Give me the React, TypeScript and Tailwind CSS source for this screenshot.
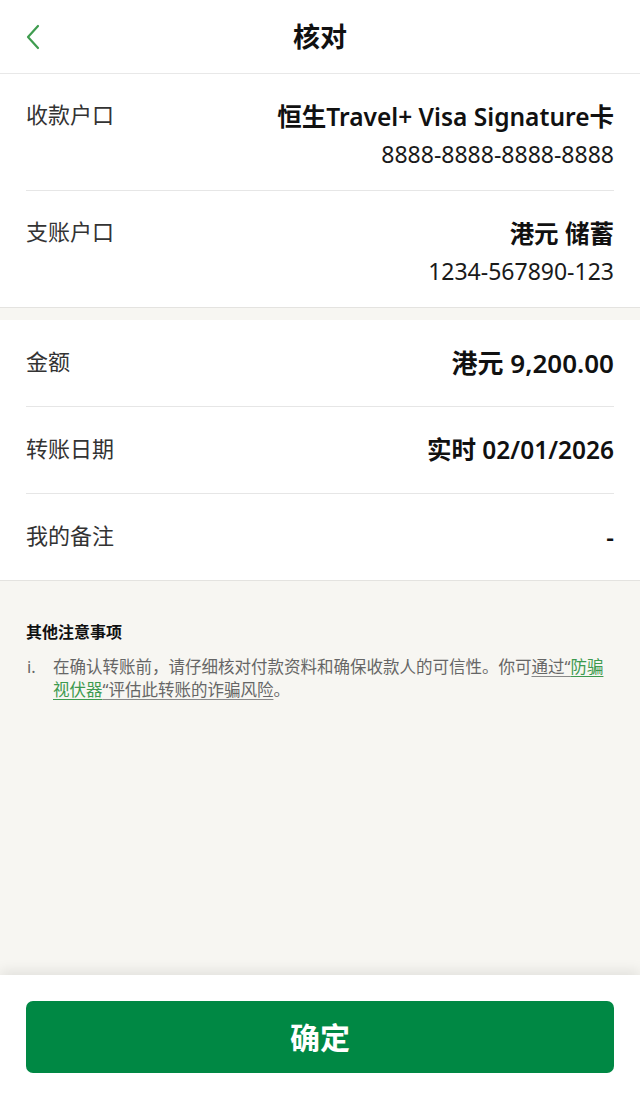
import type { ReactNode } from "react";

// ── Rows ──────────────────────────────────────────────────────────────────────

function AccountRow({
  label,
  title,
  number,
  last,
}: {
  label:  string;
  title:  string;
  number: string;
  last?:  boolean;
}) {
  return (
    <div className={"flex justify-between items-start pt-[27px] pb-[20px] " + (last ? "" : "border-b border-[#e6e6e6]")}>
      <div className="text-[22px] leading-[26px] text-[#333333]">{label}</div>
      <div className="flex flex-col items-end">
        <div className="text-[24.5px] leading-[32px] font-semibold text-[#111111]">{title}</div>
        <div className="mt-[5px] text-[23px] leading-[32px] text-[#1a1a1a]">{number}</div>
      </div>
    </div>
  );
}

function DetailRow({
  label,
  value,
  size,
  last,
}: {
  label: string;
  value: ReactNode;
  size:  string;
  last?: boolean;
}) {
  return (
    <div className={"flex justify-between items-start py-[27px] " + (last ? "" : "border-b border-[#e6e6e6]")}>
      <div className="text-[22px] leading-[28px] text-[#333333]">{label}</div>
      <div className={"leading-[32px] font-semibold text-[#111111] " + size}>{value}</div>
    </div>
  );
}

// ── Page ──────────────────────────────────────────────────────────────────────

export default function App() {
  return (
    <div
      className="w-[640px] h-[1100px] flex flex-col bg-[#f7f6f2] overflow-hidden"
      style={{ fontFamily: '"Noto Sans", "Noto Sans CJK SC", sans-serif' }}
    >
      {/* Header */}
      <div className="h-[74px] shrink-0 grid grid-cols-[1fr_auto_1fr] items-center bg-white border-b border-[#e8e8e8]">
        <div className="pl-[24px] flex items-center">
          <svg width="18" height="28" viewBox="0 0 18 28" fill="none">
            <path d="M14 3 L4 14 L14 25" stroke="#3f9c4f" strokeWidth="2.2" strokeLinecap="round" strokeLinejoin="round" />
          </svg>
        </div>
        <div className="text-[27px] font-bold text-[#111111] leading-none">核对</div>
        <div />
      </div>

      {/* Accounts */}
      <div className="bg-white px-[26px] border-b border-[#e4e3e0]">
        <AccountRow label="收款户口" title="恒生Travel+ Visa Signature卡" number="8888-8888-8888-8888" />
        <AccountRow label="支账户口" title="港元 储蓄" number="1234-567890-123" last />
      </div>

      {/* Transfer details */}
      <div className="mt-[12px] bg-white px-[26px] border-b border-[#e4e3e0]">
        <DetailRow label="金额" value="港元 9,200.00" size="text-[26px]" />
        <DetailRow label="转账日期" value="实时 02/01/2026" size="text-[24.5px]" />
        <DetailRow label="我的备注" value="-" size="text-[24px]" last />
      </div>

      {/* Notes */}
      <div className="flex-1 px-[26px] pt-[40px]">
        <div className="text-[16px] leading-[22px] font-bold text-[#111111]">其他注意事项</div>
        <div className="mt-[12px] flex text-[16.5px] leading-[23px] text-[#666666]">
          <span className="w-[27px] shrink-0 pl-[1px]">i.</span>
          <p className="flex-1 pr-[6px]">
            在确认转账前，请仔细核对付款资料和确保收款人的可信性。你可
            <span className="underline decoration-[#888888] underline-offset-[3px]">通过“</span>
            <span className="underline text-[#3d9a4f] decoration-[#3d9a4f] underline-offset-[3px]">防骗视伏器</span>
            <span className="underline decoration-[#888888] underline-offset-[3px]">“评估此转账的诈骗风险</span>
            。
          </p>
        </div>
      </div>

      {/* Bottom bar */}
      <div className="h-[125px] shrink-0 bg-white px-[26px] pt-[26px] shadow-[0_-5px_12px_rgba(0,0,0,0.08)]">
        <button className="w-full h-[72px] rounded-[7px] bg-[#008844] text-white text-[30px] font-bold flex items-center justify-center">
          确定
        </button>
      </div>
    </div>
  );
}
